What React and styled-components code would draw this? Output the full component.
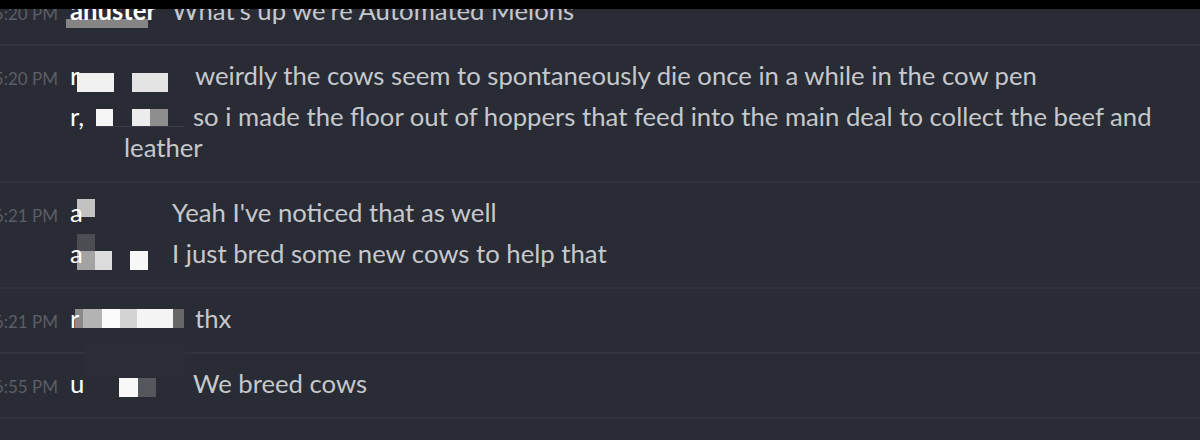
import React from "react"
import styled, { createGlobalStyle } from "styled-components"

const GlobalStyle = createGlobalStyle`
  html, body {
    margin: 0;
    padding: 0;
    background: #292c34;
    overflow: hidden;
  }
  body {
    font-family: Lato, "Open Sans", sans-serif;
  }
`

const Page = styled.div`
  width: 1200px;
  height: 440px;
  display: flex;
  flex-direction: column;
  background: #292c34;
  overflow: hidden;
`

const TopBar = styled.div`
  height: 9px;
  flex: none;
  background: #000;
  position: relative;
  z-index: 2;
`

const Viewport = styled.div`
  flex: 1;
  overflow: hidden;
`

const List = styled.div`
  margin-top: -28px;
`

const Group = styled.div`
  display: flex;
  align-items: baseline;
  padding: 14px 20px 18px 0;
  border-bottom: 2px solid #31343c;
`

const Time = styled.div`
  flex: none;
  width: 58px;
  margin-right: 12px;
  display: flex;
  justify-content: flex-end;
  white-space: nowrap;
  font-size: 17px;
  color: #5b5e66;
`

const Lines = styled.div`
  flex: 1;
  display: flex;
  flex-direction: column;
  gap: 10px;
`

const Line = styled.div`
  padding-left: 54px;
  text-indent: -54px;
  font-size: 25.7px;
  line-height: 31px;
  color: #c6c8cd;
`

const Name = styled.span`
  display: inline-block;
  position: relative;
  text-indent: 0;
  width: ${(p) => p.$w}px;
  color: #fff;
  font-weight: ${(p) => (p.$bold ? 700 : 400)};
  vertical-align: baseline;
`

const Letter = styled.span`
  position: relative;
  z-index: 1;
`

// mosaic squares laid over the censored usernames
const Pixel = styled.span`
  position: absolute;
  display: block;
`

const Mosaic = ({ blocks }) =>
  blocks.map(([x, y, w, h, c], i) => (
    <Pixel key={i} style={{ left: x, top: y, width: w, height: h, background: c }} />
  ))

const Msg = ({ name, w, bold, blocks = [], children }) => (
  <Line>
    <Name $w={w} $bold={bold}>
      <Mosaic blocks={blocks} />
      <Letter>{name}</Letter>
    </Name>
    {children}
  </Line>
)

const App = () => (
  <>
    <GlobalStyle />
    <Page>
      <TopBar />
      <Viewport>
        <List>
          <Group>
            <Time>5:20 PM</Time>
            <Lines>
              <Msg name="anuster" w={102} bold blocks={[[-4, 24, 82, 9, "#858585"]]}>
                What's up we're Automated Melons
              </Msg>
            </Lines>
          </Group>

          <Group>
            <Time>5:20 PM</Time>
            <Lines>
              <Msg
                name="r"
                w={125}
                blocks={[
                  [7, 13, 37, 19, "#f0f0f0"],
                  [62, 13, 36, 19, "#e4e4e4"],
                ]}
              >
                weirdly the cows seem to spontaneously die once in a while in the cow pen
              </Msg>
              <Msg
                name="r,"
                w={123}
                blocks={[
                  [26, 8, 17, 18, "#f6f6f6"],
                  [62, 8, 18, 18, "#ececec"],
                  [80, 8, 18, 18, "#8e8e8e"],
                  [26, 25, 88, 1, "#3a3d45"],
                ]}
              >
                so i made the floor out of hoppers that feed into the main deal to collect the beef and leather
              </Msg>
            </Lines>
          </Group>

          <Group>
            <Time>6:21 PM</Time>
            <Lines>
              <Msg name="a" w={102} blocks={[[7, 2, 18, 18, "#c2c2c2"]]}>
                Yeah I've noticed that as well
              </Msg>
              <Msg
                name="a"
                w={102}
                blocks={[
                  [7, -4, 18, 17, "#4b4d52"],
                  [7, 13, 18, 19, "#a3a3a3"],
                  [25, 13, 17, 19, "#dcdcdc"],
                  [60, 13, 18, 19, "#f7f7f7"],
                ]}
              >
                I just bred some new cows to help that
              </Msg>
            </Lines>
          </Group>

          <Group>
            <Time>6:21 PM</Time>
            <Lines>
              <Msg
                name="r"
                w={125}
                blocks={[
                  [5, 6, 8, 19, "#8a8a8a"],
                  [13, 6, 19, 19, "#b3b3b3"],
                  [32, 6, 18, 19, "#fafafa"],
                  [50, 6, 17, 19, "#d3d3d3"],
                  [67, 6, 36, 19, "#f4f4f4"],
                  [103, 6, 11, 19, "#676767"],
                  [15, 42, 100, 30, "#2b2e36"],
                ]}
              >
                thx
              </Msg>
            </Lines>
          </Group>

          <Group>
            <Time>6:55 PM</Time>
            <Lines>
              <Msg
                name="u"
                w={123}
                blocks={[
                  [49, 10, 19, 19, "#f8f8f8"],
                  [68, 10, 18, 19, "#55575c"],
                ]}
              >
                We breed cows
              </Msg>
            </Lines>
          </Group>
        </List>
      </Viewport>
    </Page>
  </>
)

export default App
